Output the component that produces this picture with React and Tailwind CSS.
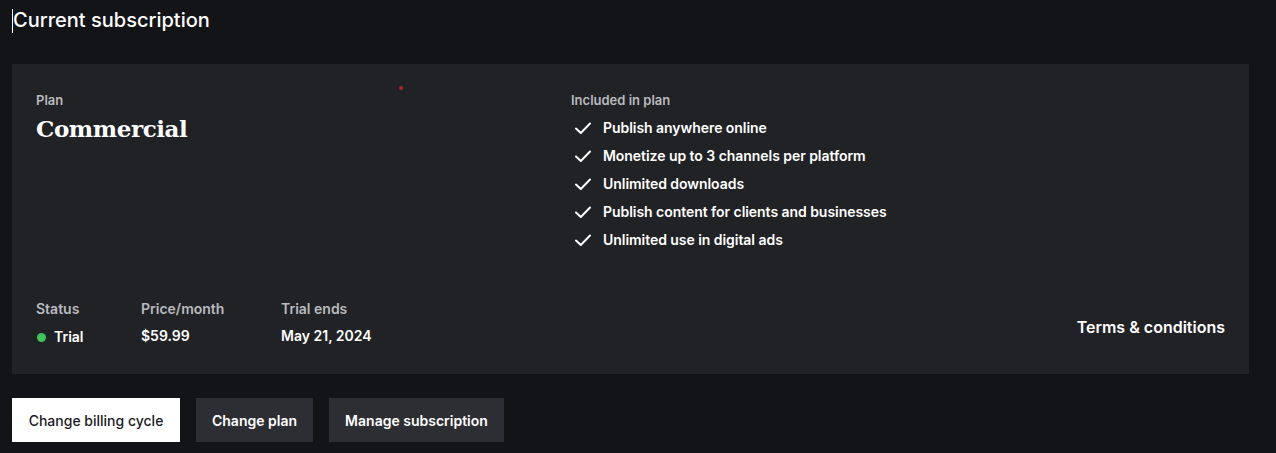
import React from "react";

const Check = () => (
  <svg width="20" height="20" viewBox="0 0 20 20" fill="none" className="shrink-0">
    <path d="M3 10.5 L7.8 15 L17 5.5" stroke="white" strokeWidth="2" strokeLinecap="round" strokeLinejoin="round" />
  </svg>
);

const items = [
  "Publish anywhere online",
  "Monetize up to 3 channels per platform",
  "Unlimited downloads",
  "Publish content for clients and businesses",
  "Unlimited use in digital ads",
];

export default function App() {
  return (
    <div className="min-h-[453px] w-full bg-[#131418] text-white font-['Inter',sans-serif] px-3">
      <div className="h-[64px] pt-[7px] flex items-start">
        <span className="w-px h-[24px] bg-white mt-[2px]"></span>
        <h1 className="text-[20px] leading-[26px] font-medium">Current subscription</h1>
      </div>
      <div className="relative mr-[15px] h-[310px] bg-[#212226] px-6 pt-[26px] pb-[28px] flex flex-col justify-between">
        <span className="absolute left-[387px] top-[22px] w-[4px] h-[4px] rounded-full bg-[#b0222a]"></span>
        <div className="flex">
          <div className="w-[535px]">
            <div className="text-[13px] leading-[20px] font-semibold text-[#b9babe]">Plan</div>
            <div className="mt-[6px] font-['DejaVu_Serif',serif] font-bold text-[23px] leading-[26px] tracking-[-0.4px]">Commercial</div>
          </div>
          <div>
            <div className="text-[13px] leading-[20px] font-semibold text-[#b9babe]">Included in plan</div>
            <ul className="mt-[4px] flex flex-col">
              {items.map((t) => (
                <li key={t} className="flex items-center gap-[10px] h-[28px] pl-[2px] text-[14px] font-semibold tracking-[-0.05px]">
                  <Check />
                  <span className="-translate-y-[1px]">{t}</span>
                </li>
              ))}
            </ul>
          </div>
        </div>
        <div className="flex items-center justify-between">
          <div className="flex">
            <div className="w-[105px]">
              <div className="text-[14px] leading-[20px] font-semibold text-[#b9babe]">Status</div>
              <div className="mt-[7px] flex items-center gap-[7px] pl-[1px] text-[14px] leading-[20px] font-semibold">
                <span className="w-[9px] h-[9px] rounded-full bg-[#3fc35a] translate-y-[1px]"></span>
                <span className="translate-y-[1px] ml-[1px]">Trial</span>
              </div>
            </div>
            <div className="w-[140px]">
              <div className="text-[14px] leading-[20px] font-semibold text-[#b9babe]">Price/month</div>
              <div className="mt-[7px] text-[14px] leading-[20px] font-semibold">$59.99</div>
            </div>
            <div>
              <div className="text-[14px] leading-[20px] font-semibold text-[#b9babe]">Trial ends</div>
              <div className="mt-[7px] text-[14px] leading-[20px] font-semibold">May 21, 2024</div>
            </div>
          </div>
          <a className="mt-[8px] text-[16px] leading-[22px] font-semibold">Terms &amp; conditions</a>
        </div>
      </div>
      <div className="mt-[24px] flex gap-4">
        <button className="h-[44px] w-[168px] bg-white text-[#1a1b1f] text-[14px] font-medium">Change billing cycle</button>
        <button className="h-[44px] w-[117px] bg-[#2c2e33] text-white text-[14px] font-semibold">Change plan</button>
        <button className="h-[44px] w-[175px] bg-[#2c2e33] text-white text-[14px] font-semibold">Manage subscription</button>
      </div>
    </div>
  );
}
